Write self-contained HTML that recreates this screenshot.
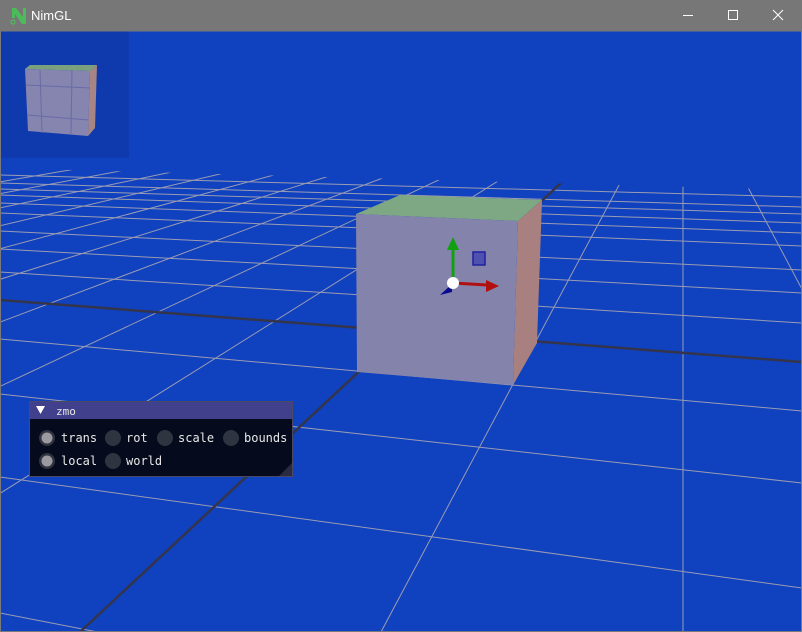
<!DOCTYPE html>
<html><head><meta charset="utf-8"><style>
html,body{margin:0;padding:0;width:802px;height:632px;overflow:hidden;background:#1041bf;position:relative;}
#t{position:absolute;left:0;top:0;width:802px;height:31px;background:#777;font:13px "Liberation Sans",sans-serif;color:#fff;overflow:hidden;}
#t span{position:absolute;left:31px;top:8px;}
svg{position:absolute;left:0;top:0;display:block}
.mono{font-family:"DejaVu Sans Mono","Liberation Mono",monospace;font-size:12px;fill:#e8e8e8}
</style></head><body>
<svg width="802" height="632" viewBox="0 0 802 632">
<rect x="0" y="31" width="802" height="601" fill="#1041bf"/>
<defs><clipPath id="g"><polygon points="0,168 802,190 802,632 0,632"/></clipPath></defs>
<g clip-path="url(#g)" stroke="#9a9cb2" stroke-width="1" fill="none">
<line x1="0" y1="175" x2="802" y2="197"/>
<line x1="0" y1="183" x2="802" y2="207"/>
<line x1="0" y1="189" x2="802" y2="214"/>
<line x1="0" y1="195" x2="802" y2="223"/>
<line x1="0" y1="203" x2="802" y2="233"/>
<line x1="0" y1="213" x2="802" y2="246"/>
<line x1="0" y1="231" x2="802" y2="270"/>
<line x1="0" y1="249" x2="802" y2="293"/>
<line x1="0" y1="272" x2="802" y2="323"/>
<line x1="0" y1="339" x2="802" y2="411"/>
<line x1="0" y1="394" x2="802" y2="483"/>
<line x1="0" y1="477" x2="802" y2="588"/>
<line x1="0" y1="613" x2="802" y2="769"/>
<line x1="-221" y1="632" x2="683" y2="65"/>
<line x1="-522" y1="632" x2="683" y2="65"/>
<line x1="-823" y1="632" x2="683" y2="65"/>
<line x1="-1124" y1="632" x2="683" y2="65"/>
<line x1="-1425" y1="632" x2="683" y2="65"/>
<line x1="-1726" y1="632" x2="683" y2="65"/>
<line x1="-2027" y1="632" x2="683" y2="65"/>
<line x1="-2328" y1="632" x2="683" y2="65"/>
<line x1="-2629" y1="632" x2="683" y2="65"/>
<line x1="381" y1="632" x2="683" y2="65"/>
<line x1="683" y1="632" x2="683" y2="65"/>
<line x1="984" y1="632" x2="683" y2="65"/>
<line x1="1285" y1="632" x2="683" y2="65"/>
</g>
<g clip-path="url(#g)" stroke="#34344a" stroke-width="2.5">
<line x1="0" y1="300" x2="802" y2="362"/>
<line x1="80" y1="632" x2="562" y2="182"/>
</g>
<polygon points="356,214 400,195 542,200 518,221" fill="#7ea883"/>
<polygon points="518,221 542,200 537,343 513,385" fill="#a88080"/>
<polygon points="356,214 518,221 513,385 357,372" fill="#8383ab"/>
<line x1="453" y1="283" x2="453" y2="248" stroke="#10a010" stroke-width="3"/>
<polygon points="453,237 447,250 459,250" fill="#10a010"/>
<line x1="453" y1="283" x2="487" y2="285" stroke="#b01010" stroke-width="3"/>
<polygon points="499,286 486,280 486,292" fill="#b01010"/>
<polygon points="440,295 452,284 452,292" fill="#0a0a90"/>
<rect x="473" y="252" width="12" height="13" fill="#5050b0" stroke="#2020a0" stroke-width="1.5"/>
<circle cx="453" cy="283" r="6" fill="#fff"/>
<rect x="0" y="31" width="129" height="127" fill="#0f3aae"/>
<polygon points="25,69 30,65 97,65 90,71" fill="#7aa07e"/>
<polygon points="90,71 97,65 95,128 88,136" fill="#a88585"/>
<polygon points="25,69 90,71 88,136 28,131" fill="#8585b0"/>
<g stroke="#6a6aa8" stroke-width="1"><line x1="40" y1="70" x2="42" y2="133"/><line x1="72" y1="70" x2="71" y2="135"/><line x1="26" y1="85" x2="90" y2="88"/><line x1="27" y1="115" x2="89" y2="120"/></g>
<rect x="29.5" y="401.5" width="263" height="75" fill="#050a1c" stroke="#4a4a64"/>
<rect x="30" y="402" width="262" height="17" fill="#40408c"/>
<polygon points="36,406 45,406 40.5,414" fill="#fff"/>
<text x="56" y="415" class="mono" style="font-size:11px">zmo</text>
<polygon points="292,463 292,476 279,476" fill="#2a2a40"/>
<g fill="#2e3440">
<circle cx="47" cy="438" r="8" fill="#30343e"/><circle cx="47" cy="438" r="5.5" fill="#9a9aa0"/>
<circle cx="113" cy="438" r="8"/><circle cx="165" cy="438" r="8"/><circle cx="231" cy="438" r="8"/>
<circle cx="47" cy="461" r="8" fill="#30343e"/><circle cx="47" cy="461" r="5.5" fill="#9a9aa0"/>
<circle cx="113" cy="461" r="8"/>
</g>
<text x="61" y="442" class="mono">trans</text>
<text x="126" y="442" class="mono">rot</text>
<text x="178" y="442" class="mono">scale</text>
<text x="244" y="442" class="mono">bounds</text>
<text x="61" y="465" class="mono">local</text>
<text x="126" y="465" class="mono">world</text>
<rect x="0.5" y="31" width="801" height="600.5" fill="none" stroke="#7a7a7a"/>
</svg>
<div id="t">
<svg width="20" height="20" style="left:9px;top:6px" viewBox="0 0 20 20"><polygon points="3,2 7,2 14,11 14,2 17,2 17,18 13,18 6,8 6,12 3,12" fill="#4cbb5a"/><circle cx="4" cy="16" r="2" fill="none" stroke="#4cbb5a" stroke-width="1.2"/></svg>
<span>NimGL</span>
<svg width="140" height="31" style="left:662px;top:0" viewBox="0 0 140 31"><line x1="21" y1="15.5" x2="31" y2="15.5" stroke="#fff"/><rect x="66.5" y="10.5" width="9" height="9" fill="none" stroke="#fff"/><path d="M111 10 L121 20 M121 10 L111 20" stroke="#fff"/></svg>
</div>
</body></html>
